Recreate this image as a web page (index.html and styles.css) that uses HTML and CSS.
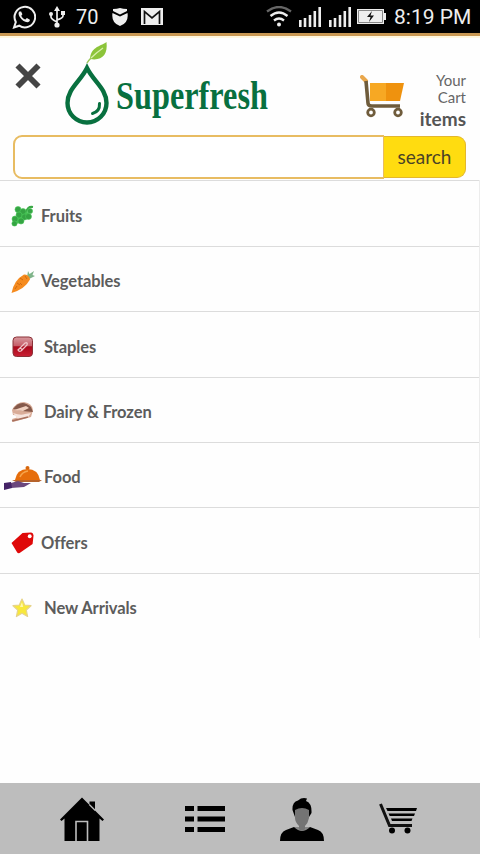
FILE: index.html
```html
<!DOCTYPE html>
<html lang="en">
<head>
<meta charset="utf-8">
<title>Superfresh</title>
<link rel="stylesheet" href="styles.css">
</head>
<body>
<div class="app">
  <div class="status">
    <svg class="s-chat" width="24" height="24" viewBox="0 0 24 24"><path d="M2 22.500 3.800 17A10.300 10.300 0 1 1 7.200 20.700Z" fill="none" stroke="#eee" stroke-width="2"/><path d="M7.400 6.600c-1.300 1.200-1 3.200.2 5.200 2 3.400 5 5.500 7.800 5.500 1.500-.2 2.600-1.200 2.500-2.600l-3-1.600-1.500 1.500c-2-.8-3.500-2.300-4.100-3.900l1.100-1.400-1.300-2.800Z" fill="#eee"/></svg>
    <svg class="s-usb" width="16" height="22" viewBox="0 0 16 22" fill="none" stroke="#eee" stroke-width="1.700"><path d="M8 3v17M2 8v3q0 2 6 5M14 7v3q0 2-6 4"/><path d="M8 0 11 5H5Z" fill="#eee" stroke="none"/><circle cx="8" cy="19" r="2.600" fill="#eee" stroke="none"/><circle cx="2" cy="8" r="2" fill="#eee" stroke="none"/><path d="M12 5h4v4h-4z" fill="#eee" stroke="none"/></svg>
    <span class="s-count">70</span>
    <svg class="s-shield" width="16" height="18" viewBox="0 0 16 18" fill="#eee"><path d="M1 1q4 0 7-1 3 1 7 1v2L8 6.500 1 3Z"/><path d="M.5 5 8 8.500 15.500 5Q17 15 8 18-1 15 .5 5Z"/></svg>
    <svg class="s-mail" width="22" height="17" viewBox="0 0 22 17"><path d="M0 0h22v17H0z" fill="#eee"/><path d="M3.500 16V3.500L11 10l7.500-6.500V16" fill="none" stroke="#111" stroke-width="1.700"/></svg>
    <svg class="s-wifi" width="26" height="21" viewBox="0 0 26 21" fill="none" stroke="#eee" stroke-width="2.300"><path d="M1 5.500Q13-3.500 25 5.500" stroke="#666"/><path d="M4.500 10Q13 3 21.500 10M8 14.500q5-4 10 0"/><circle cx="13" cy="18.500" r="2" fill="#eee" stroke="none"/></svg>
    <svg class="s-signal" width="22" height="20" viewBox="0 0 22 20" stroke="#eee" stroke-width="2.600"><path d="M1.300 20v-7M6 20v-9M11 20V8M15.800 20V4M20.700 20V0"/></svg>
    <svg class="s-signal2" width="22" height="20" viewBox="0 0 22 20" stroke="#eee" stroke-width="2.600"><path d="M1.300 20v-7M6 20v-9M11 20V8M15.800 20V4M20.700 20V0"/></svg>
    <svg class="s-battery" width="29" height="15" viewBox="0 0 29 15"><path d="M0 0h27v4h2v7h-2v4H0z" fill="#eee"/><path d="M1.500 1.500h24v12h-24z" fill="none" stroke="#888"/><path d="m15 2-5 6h3.500L12 13l5-6.500h-3.500Z" fill="#111"/></svg>
    <span class="s-time">8:19 PM</span>
  </div>
  <header class="header">
    <div class="brand">
      <svg class="close" width="26" height="26" viewBox="0 0 26 26"><path d="m2.500 2.500 21 21m0-21-21 21" stroke="#454545" stroke-width="5.800"/></svg>
      <svg class="logo" width="208" height="86" viewBox="0 0 208 86">
        <path d="M24 26C17 40 4.500 47 4.500 61A19.500 19.500 0 0 0 43.500 61C43.500 47 31 40 24 26Z" fill="none" stroke="#08703f" stroke-width="4.400"/>
        <path d="M36.500 61.500Q37 69.500 29.500 71.500" fill="none" stroke="#08703f" stroke-width="3" stroke-linecap="round"/>
        <path d="M27 17C28 5 36 5 43.500 0 45 13 39 19 27 17Z" fill="#8cc43a"/>
        <path d="M28 16Q33 11 40 6" fill="none" stroke="#d9efac" stroke-width="1.200"/>
        <path d="M24 21Q25 19 28 16" fill="none" stroke="#9bc859" stroke-width="1.500"/>
        <text class="wordmark" x="53" y="67" textLength="152" lengthAdjust="spacingAndGlyphs">Superfresh</text>
      </svg>
      <svg class="cart" width="46" height="44" viewBox="0 0 46 44"><path d="M10 8h17v18H10z" fill="#f7a823"/><path d="M26 8h18l-4 18H26z" fill="#ef920e"/><path d="m2 2 4 4" stroke="#e9a74c" stroke-width="4" stroke-linecap="round"/><path d="M6 6 8 28q0 3 4 3h28" fill="none" stroke="#6f5c3c" stroke-width="3.600"/><g fill="#fff" stroke="#6f5c3c" stroke-width="2.800"><circle cx="11" cy="37.500" r="3.300"/><circle cx="38" cy="37.500" r="3.300"/></g></svg>
      <div class="cart-text"><span>Your</span><span>Cart</span><b>items</b></div>
    </div>
    <div class="search"><div class="field"></div><div class="button">search</div></div>
  </header>
  <nav class="menu">
    <div class="row"><svg class="ic" width="24" height="22" viewBox="0 0 24 22"><path d="M15 8q1-7 7-6" fill="none" stroke="#3ca847" stroke-width="2"/><path d="m5 3 8 2 6 4-10 9-5 1 2-9Z" fill="#45c252"/><g fill="#35a343" stroke="#4cc95a" stroke-width=".6"><circle cx="7" cy="4.500" r="3"/><circle cx="12" cy="6.500" r="3"/><circle cx="19" cy="6" r="2.600"/><circle cx="8" cy="10" r="3"/><circle cx="13.500" cy="12" r="3"/><circle cx="17.500" cy="11.500" r="3"/><circle cx="4" cy="14" r="3"/><circle cx="10" cy="16" r="3"/><circle cx="3.500" cy="18.500" r="2.600"/></g></svg><span>Fruits</span></div>
    <div class="row"><svg class="ic" width="24" height="24" viewBox="0 0 24 24"><path d="m16 7 1-6 1.500 3L23 1l-1.500 4L24 6l-6 3Z" fill="#7fb48a"/><path d="M.5 23Q3 10 13 4.500q5 0 6 5Q14 19 .5 23Z" fill="#f58b1f"/><path d="m9 8 3 2m2-4 2 3M6 13l3 2M4 19l2-3m5-1-2-2" stroke="#cf6a10"/></svg><span>Vegetables</span></div>
    <div class="row wide"><svg class="ic" width="24" height="22" viewBox="0 0 24 22"><defs><linearGradient id="red" x2="0" y2="1"><stop offset="0" stop-color="#d79a9f"/><stop offset=".45" stop-color="#c65d68"/><stop offset=".5" stop-color="#a9081b"/><stop offset="1" stop-color="#c92034"/></linearGradient></defs><rect x="2" y="1" width="19.500" height="19.500" rx="3.500" fill="url(#red)" stroke="#8b3037"/><path d="m7 14 7-7q3-1 2 2l-6 6q-2 1-3-1Zm2-2 3 2" fill="none" stroke="#f0c6ca" stroke-width="1.300"/></svg><span>Staples</span></div>
    <div class="row wide"><svg class="ic" width="24" height="22" viewBox="0 0 24 22"><path d="M1 9Q5 1 13 1q8 1 9 8l-2 7L2 21l-1-3 10-3-9-1Z" fill="#d9ac98"/><path d="M2 8q8-11 18-2l2 5-11-1Z" fill="#85594a"/><path d="m3 9 12-4 3 2-6 3Z" fill="#f0d0bf"/><path d="M2 12q8 3 12 1l6-1-3 4-10 2" fill="#f6e4dd"/><path d="m1 20 16-4" stroke="#a8705d" stroke-width="1.500"/></svg><span>Dairy &amp; Frozen</span></div>
    <div class="row food"><svg class="ic" width="38" height="24" viewBox="0 0 38 24"><circle cx="23.500" cy="2" r="2" fill="#d6660d"/><path d="M11 14Q13 3 23.500 3T36 14Z" fill="#e66d0b"/><path d="M16 11q2-5 8-6" fill="none" stroke="#f7a54c" stroke-width="1.500"/><path d="M8 14h30l-3 2H12Z" fill="#b6632b"/><path d="m7 17 7-2 6 2 7 0-7 4-13 1Z" fill="#6b477d"/><path d="m0 17 7-1 1 6-8 2Z" fill="#442366"/></svg><span>Food</span></div>
    <div class="row"><svg class="ic" width="24" height="24" viewBox="0 0 25 24"><path d="M.5 12 12 1.500 21 1q2 0 2.500 3l-1 9L9 22.500Q7 23 6 21Z" fill="#df0909"/><circle cx="19.500" cy="5" r="2" fill="#fff"/></svg><span>Offers</span></div>
    <div class="row wide"><svg class="ic" width="24" height="22" viewBox="0 0 24 22"><path d="m11 2 2.700 6 6.300.7-4.700 4.300 1.300 6.500-5.600-3.200-5.600 3.200L6.700 13 2 8.700 8.300 8Z" fill="#f8e83b" stroke="#e6d38a" stroke-width="1.200" stroke-linejoin="round"/><path d="m11 5 1.200 5H9Z" fill="#fff8ac"/></svg><span>New Arrivals</span></div>
  </nav>
  <footer class="tabs">
    <svg class="t-home" width="44" height="44" viewBox="0 0 44 44"><path d="m0 22.500 22-22 7.500 7.500V4.500H35v9l9 9-1.500 1.500-3-2.500V44H4.500V21.500l-3 2.500Z"/><path d="M16 44V24.500h11.500V44" fill="none" stroke="#bdbdbd" stroke-width="1.600"/><path d="m29.300 7.500 6 6" stroke="#bdbdbd" stroke-width="1.300"/></svg>
    <svg class="t-list" width="40" height="26" viewBox="0 0 40 26"><path d="M0 0h9v5H0zM12.500 0H40v5H12.500zM0 10.500h9v5H0zM12.500 10.500H40v5H12.500zM0 21h9v5H0zM12.500 21H40v5H12.500z"/></svg>
    <svg class="t-user" width="44" height="43" viewBox="0 0 44 43"><path d="M14 29h16l-4 6h-8Z" fill="#858585"/><path d="M0 43q0-9 6-11l8-3q8 8 16 0l8 3q6 2 6 11Z"/><path d="M12.500 12Q12 4 18 2.500 22-1 27 .5l-1 2.500q6 2 5.500 12L29 19H15Z"/><path d="M15 12q7-4 14 0v8q-1 5-4 8v3q-3 3-6 0v-3q-4-4-4-8Z" fill="#747474"/></svg>
    <svg class="t-cart" width="39" height="31" viewBox="0 0 39 31"><path d="m1.500 1 9 21.500H33" fill="none" stroke="#111" stroke-width="3"/><path d="M7 5h31l-1 3H8.500zM9.500 10.500H36l-1 2.500H10.700zM12 15.500h21.500l-1 2.500H13z"/><circle cx="13" cy="27.500" r="3"/><circle cx="28.500" cy="27.500" r="3"/></svg>
  </footer>
</div>
</body>
</html>
```
FILE: styles.css
```css
* { box-sizing: border-box; }
body { margin: 0; background: #fefefe; font-family: Lato, "Liberation Sans", sans-serif; color: #505050; }
svg { display: block; flex: none; }
.app { width: 480px; height: 854px; display: flex; flex-direction: column; overflow: hidden; }

.status { height: 36px; flex: none; display: flex; align-items: center; padding: 0 0 0 12px; background: #000; border-bottom: 3px solid #c99853; color: #eee; font-family: Roboto, sans-serif; font-size: 20px; white-space: nowrap; }
.s-usb { margin-left: 13px; }
.s-count { width: 24px; margin-left: 11px; }
.s-shield { margin-left: 12px; }
.s-mail { margin-left: 13px; }
.s-wifi { margin-left: 103px; }
.s-signal { margin-left: 7px; }
.s-signal2 { margin-left: 8px; }
.s-battery { margin-left: 6px; }
.s-time { margin-left: 8px; font-size: 21px; }

.header { height: 144px; flex: none; border-top: 2px solid #fff8df; }
.brand { height: 97px; display: flex; align-items: flex-start; padding: 4px 14px 0 15px; }
.close { margin-top: 21px; }
.logo { margin-left: 22px; overflow: visible; }
.wordmark { font: bold 40px/1 "Liberation Serif", serif; fill: #08703f; }
.cart { margin: 33px 0 0 89px; }
.cart-text { flex: 1; display: flex; flex-direction: column; align-items: flex-end; margin-top: 30px; font-size: 15px; line-height: 17px; color: #666; }
.cart-text b { font-size: 19px; line-height: 25px; color: #555; }
.search { height: 44px; width: 453px; margin-left: 13px; display: flex; }
.field { width: 371px; background: #fff; border: 2px solid #e8bc62; border-right-width: 1px; border-radius: 9px 0 0 9px; }
.button { flex: 1; height: 42px; margin-top: 1px; background: #ffdc10; border: 1px solid #e3b72d; border-left: 0; border-radius: 0 9px 9px 0; font-size: 19px; line-height: 40px; text-align: center; color: #4b4327; }

.menu { height: 458px; flex: none; display: grid; grid-template-rows: 66px repeat(6, 65.35px); border-right: 1px solid #ececec; }
.row { display: flex; align-items: center; padding: 5px 0 0 11px; border-top: 1px solid #dcdcdc; font-size: 16.500px; letter-spacing: -.08px; font-weight: bold; color: #5c5c5c; }
.row span { margin-top: -1px; }
.row .ic { margin-right: 6px; }
.row.wide .ic { margin-right: 9px; }
.row.food { padding-left: 4px; }
.row.food .ic { margin-right: 2px; }

.tabs { height: 71px; margin-top: auto; flex: none; background: #bdbdbd; display: flex; align-items: center; padding: 1px 0 0 60px; }
.t-list { margin-left: 81px; }
.t-user { margin-left: 55px; }
.t-cart { margin: -2px 0 0 55px; }
```
